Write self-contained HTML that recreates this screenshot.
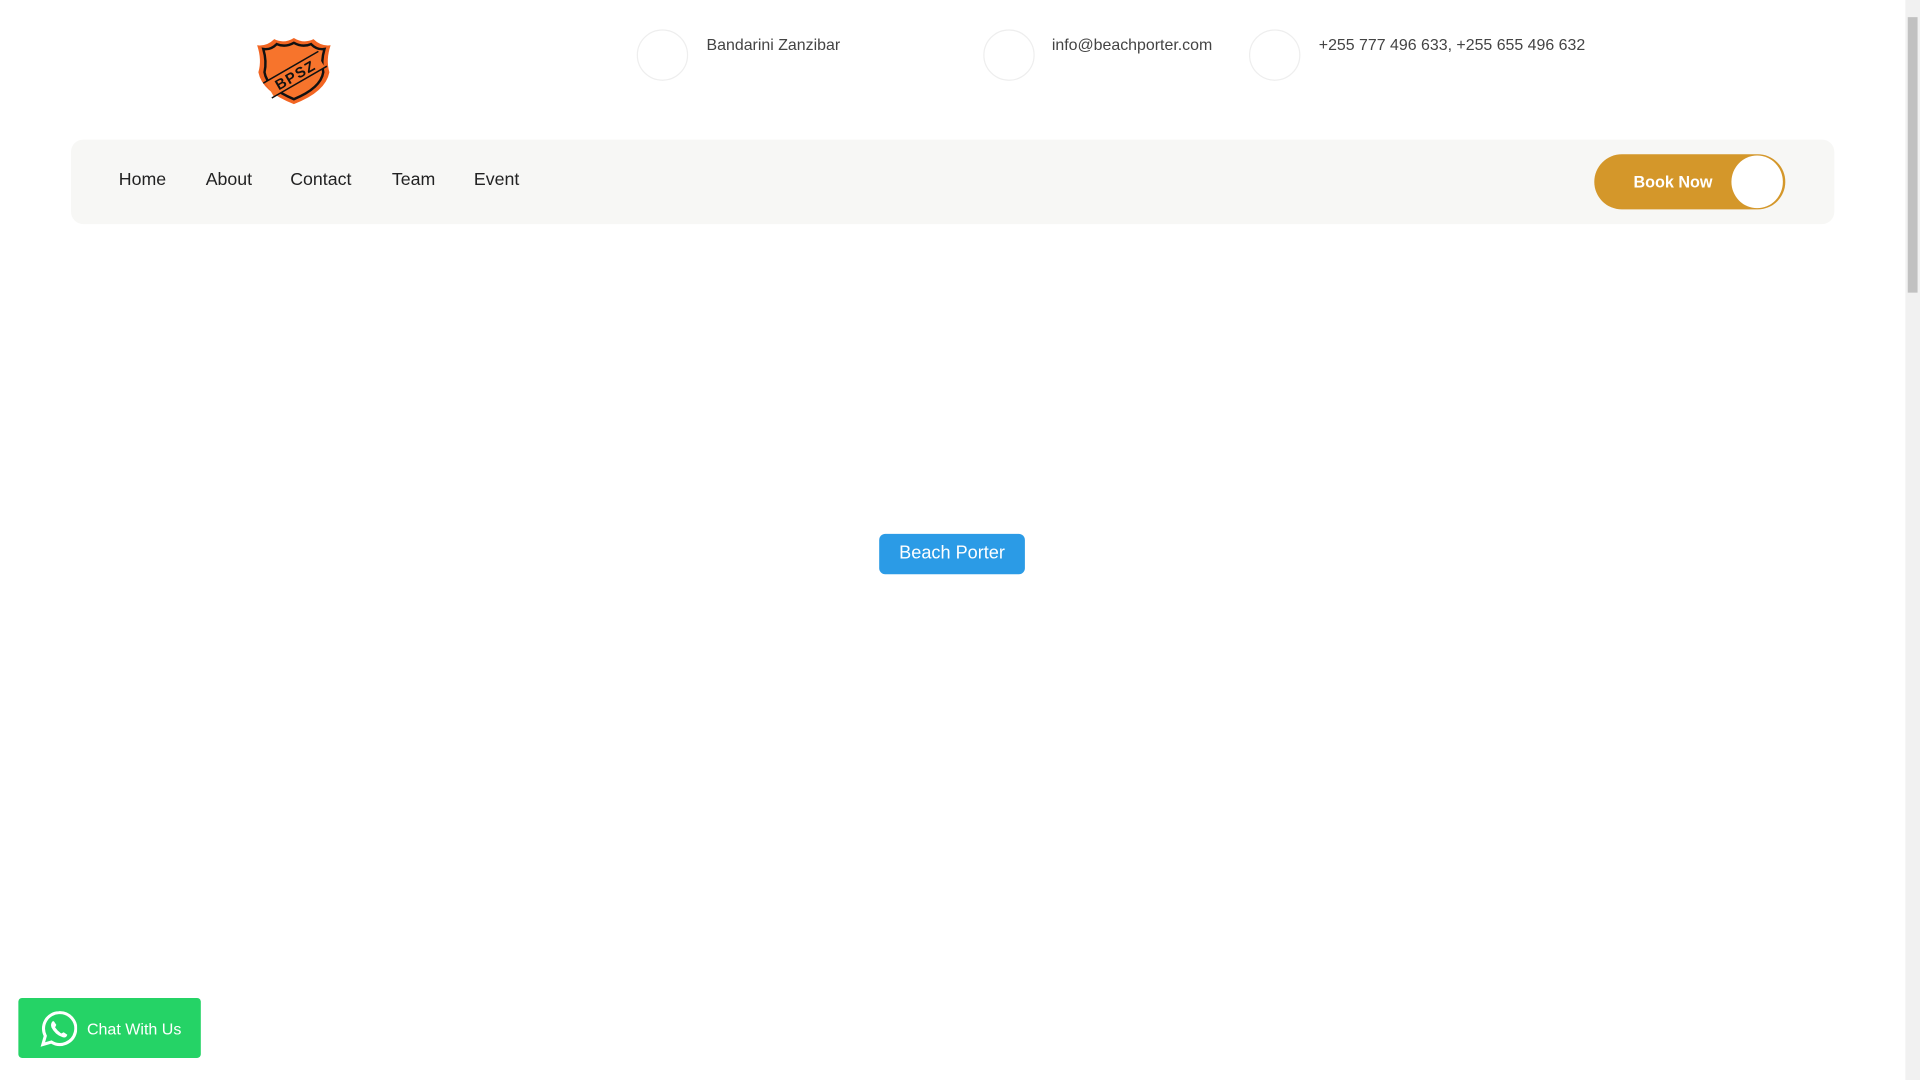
<!DOCTYPE html>
<html><head><meta charset="utf-8"><style>
html,body{margin:0;padding:0;width:1920px;height:1080px;overflow:hidden;background:#fff}
#w{position:absolute;left:0;top:0;width:1568px;height:882px;transform:scale(1.22449);transform-origin:0 0;font-family:"Liberation Sans",sans-serif}
.a{position:absolute}
.ic{width:40px;height:40px;border:1px solid #eee;border-radius:50%;top:24px}
.t{top:29px;font-size:13px;color:#444;white-space:nowrap}
.nav{left:58px;top:114px;width:1440px;height:69px;background:#f7f7f5;border-radius:10px}
.n{top:139px;font-size:14.5px;color:#222}
</style></head><body><div id="w">
<svg class="a" style="left:206px;top:29px" width="68" height="57" viewBox="0 0 68 57">
<path d="M4 8 Q12 9 18 3 Q26 7 34 2 Q42 7 50 3 Q56 9 64 8 Q60 20 63 30 Q60 46 34 56 Q8 46 5 30 Q8 20 4 8Z" fill="#f26522"/>
<path d="M9 11 Q15 12 20 7 Q27 10 34 6 Q41 10 48 7 Q53 12 59 11 Q56 21 58 30 Q56 43 34 52 Q12 43 10 30 Q12 21 9 11Z" fill="#f7742c" stroke="#111" stroke-width="2"/>
<g transform="translate(35 32) rotate(-30)">
<rect x="-24" y="-7" width="48" height="14" fill="#f7742c"/>
<line x1="-26" y1="-7" x2="26" y2="-7" stroke="#111" stroke-width="1.2"/>
<line x1="-26" y1="7" x2="26" y2="7" stroke="#111" stroke-width="1.2"/>
<text x="0" y="4.5" font-size="12" font-weight="bold" font-family="Liberation Sans" text-anchor="middle" fill="#111" letter-spacing="1">BPSZ</text>
</g>
</svg>
<div class="a ic" style="left:520px"></div><div class="a t" style="left:577px">Bandarini Zanzibar</div>
<div class="a ic" style="left:803px"></div><div class="a t" style="left:859px">info@beachporter.com</div>
<div class="a ic" style="left:1020px"></div><div class="a t" style="left:1077px">+255 777 496 633, +255 655 496 632</div>
<div class="a nav"></div>
<div class="a n" style="left:97px">Home</div>
<div class="a n" style="left:168px">About</div>
<div class="a n" style="left:237px">Contact</div>
<div class="a n" style="left:320px">Team</div>
<div class="a n" style="left:387px">Event</div>
<div class="a" style="left:1302px;top:126px;width:156px;height:45px;background:#d4972a;border-radius:23px"></div>
<div class="a" style="left:1334px;top:141px;font-size:13.2px;font-weight:bold;color:#fff">Book Now</div>
<div class="a" style="left:1414px;top:127px;width:42px;height:43px;background:#fff;border-radius:50%"></div>
<div class="a" style="left:718px;top:436px;width:119px;height:33px;background:#2b9be6;border-radius:5px;color:#fff;font-size:14.8px;line-height:33px;text-align:center">Beach Porter</div>
<div class="a" style="left:15px;top:815px;width:149px;height:49px;background:#25d366;border-radius:3px"></div>
<svg class="a" style="left:33px;top:825px" width="30" height="30" viewBox="0 0 30 30"><path d="M15 2A13 13 0 0 0 4 21L2 28 9 26A13 13 0 1 0 15 2Z" fill="none" stroke="#fff" stroke-width="2.5"/><path d="M10 9Q8 11 9 14Q12 20 18 22Q21 23 22 20L19 18 17 19Q14 17 12 14L13 12 11 9Z" fill="#fff"/></svg>
<div class="a" style="left:71px;top:833px;font-size:13.1px;color:#fff">Chat With Us</div>
<div class="a" style="left:1556px;top:0;width:12px;height:882px;background:#f1f1f1"></div>
<div class="a" style="left:1558px;top:14px;width:8px;height:225px;background:#c1c1c1"></div>
</div></body></html>
